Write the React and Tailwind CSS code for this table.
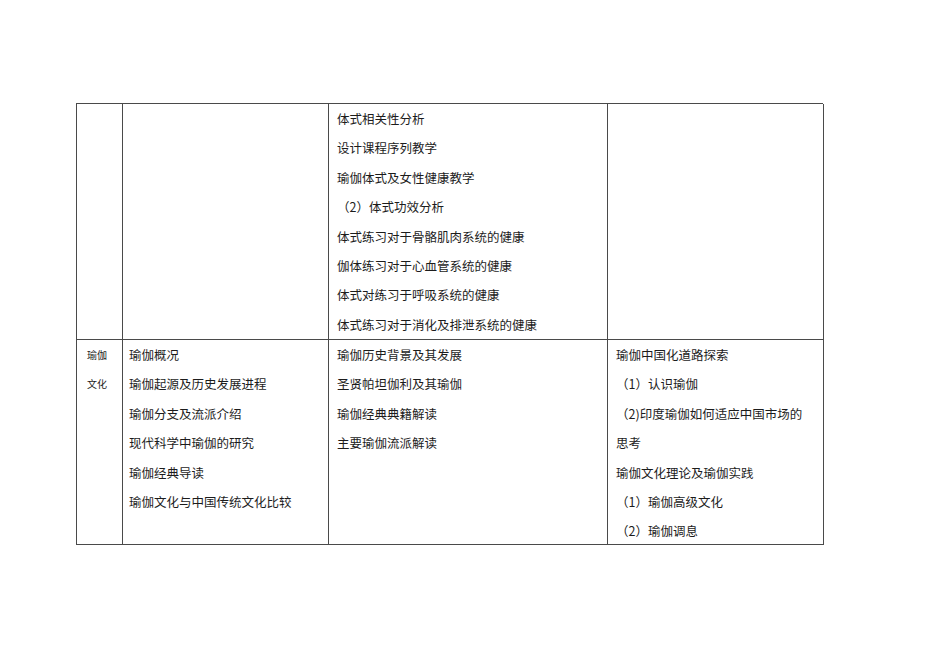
const rows = [
  {
    label: [],
    cols: [
      [],
      [
        '体式相关性分析',
        '设计课程序列教学',
        '瑜伽体式及女性健康教学',
        '（2）体式功效分析',
        '体式练习对于骨骼肌肉系统的健康',
        '伽体练习对于心血管系统的健康',
        '体式对练习于呼吸系统的健康',
        '体式练习对于消化及排泄系统的健康',
      ],
      [],
    ],
  },
  {
    label: ['瑜伽', '文化'],
    cols: [
      [
        '瑜伽概况',
        '瑜伽起源及历史发展进程',
        '瑜伽分支及流派介绍',
        '现代科学中瑜伽的研究',
        '瑜伽经典导读',
        '瑜伽文化与中国传统文化比较',
      ],
      [
        '瑜伽历史背景及其发展',
        '圣贤帕坦伽利及其瑜伽',
        '瑜伽经典典籍解读',
        '主要瑜伽流派解读',
      ],
      [
        '瑜伽中国化道路探索',
        '（1）认识瑜伽',
        '（2)印度瑜伽如何适应中国市场的',
        '思考',
        '瑜伽文化理论及瑜伽实践',
        '（1）瑜伽高级文化',
        '（2）瑜伽调息',
      ],
    ],
  },
]

const pads = ['pl-[6px]', 'pl-[8px]', 'pl-[8px]']

export default function App() {
  return (
    <div className="w-[950px] h-[672px] bg-white pt-[103px] pl-[76px] text-[#1c1c1c]"
      style={{ fontFamily: '"Noto Sans CJK SC", "Liberation Sans", sans-serif' }}>
      <div className="grid grid-cols-[46px_206px_279px_216px] grid-rows-[236px_205px] w-[747px] border-t border-l border-[#4a4a4a]">
        {rows.map((row, ri) => (
          <div key={ri} className="contents">
            {/* label column */}
            <div className="border-r border-b border-[#4a4a4a] pl-[10px] text-[10px] leading-[29.4px] overflow-hidden">
              {row.label.map(t => (
                <div key={t} className="whitespace-nowrap">{t}</div>
              ))}
            </div>
            {row.cols.map((col, ci) => (
              <div
                key={ci}
                className={`border-r border-b border-[#4a4a4a] ${pads[ci]} text-[12.5px] leading-[29.4px] overflow-hidden`}
              >
                {col.map((t, i) => (
                  <div key={i} className="whitespace-nowrap">{t}</div>
                ))}
              </div>
            ))}
          </div>
        ))}
      </div>
    </div>
  )
}
